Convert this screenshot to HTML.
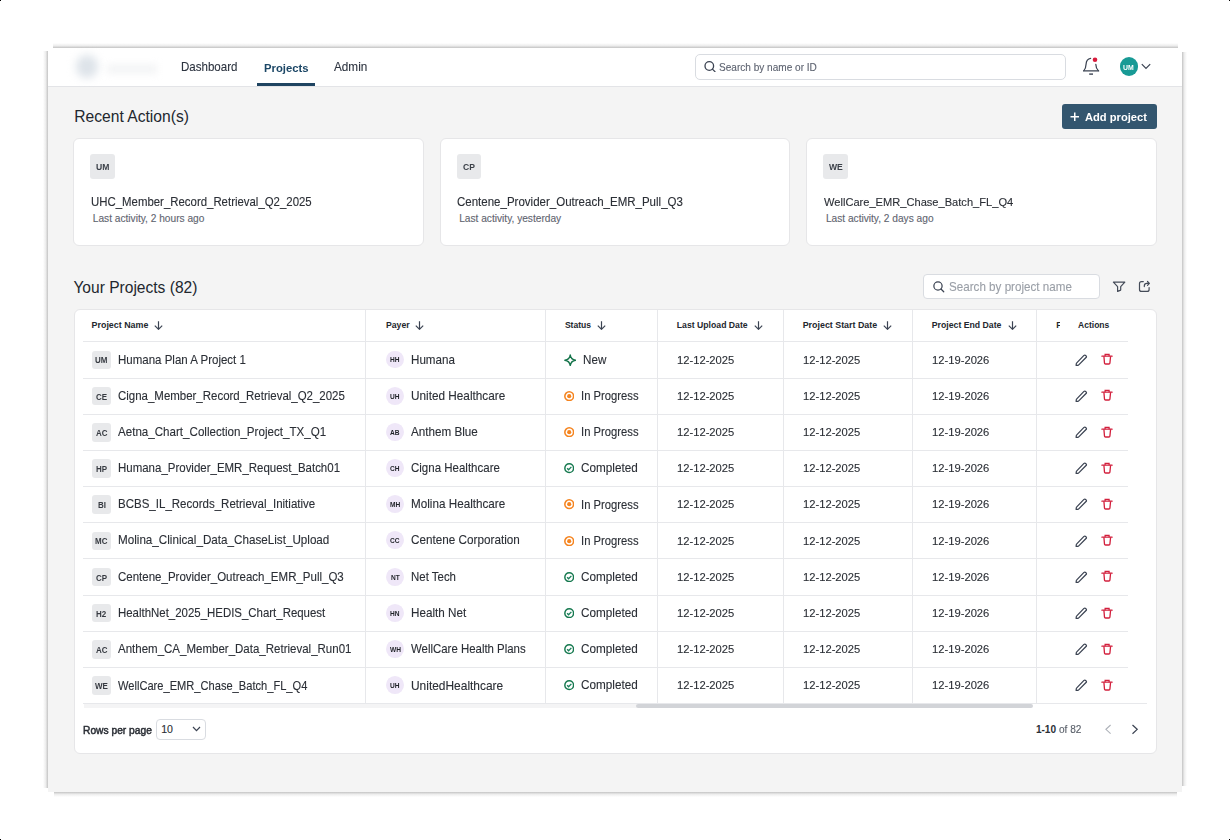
<!DOCTYPE html>
<html><head><meta charset="utf-8"><style>
html,body{margin:0;padding:0;}
body{width:1230px;height:840px;position:relative;overflow:hidden;background:#fff;font-family:"Liberation Sans",sans-serif;}
.t{position:absolute;white-space:nowrap;line-height:1;}
.r{-webkit-text-stroke:0.12px currentColor;}
</style></head><body>
<div style="position:absolute;left:0.00px;top:0.00px;width:1.00px;height:1.00px;background:#000"></div>
<div style="position:absolute;left:1229.00px;top:0.00px;width:1.00px;height:1.00px;background:#000"></div>
<div style="position:absolute;left:0.00px;top:839.00px;width:1.00px;height:1.00px;background:#000"></div>
<div style="position:absolute;left:1229.00px;top:839.00px;width:1.00px;height:1.00px;background:#000"></div>
<div style="position:absolute;left:53.00px;top:43.00px;width:1125.00px;height:5.00px;background:linear-gradient(to top,rgba(112,112,112,.42),rgba(140,140,140,.16) 45%,rgba(255,255,255,0))"></div>
<div style="position:absolute;left:43.00px;top:51.00px;width:5.00px;height:737.00px;background:linear-gradient(to left,rgba(112,112,112,.42),rgba(140,140,140,.16) 45%,rgba(255,255,255,0))"></div>
<div style="position:absolute;left:1182.00px;top:52.00px;width:5.00px;height:734.00px;background:linear-gradient(to right,rgba(112,112,112,.42),rgba(140,140,140,.16) 45%,rgba(255,255,255,0))"></div>
<div style="position:absolute;left:53.50px;top:791.50px;width:1123.00px;height:5.00px;background:linear-gradient(to bottom,rgba(112,112,112,.42),rgba(140,140,140,.16) 45%,rgba(255,255,255,0))"></div>
<div style="position:absolute;left:48.00px;top:48.00px;width:1134.00px;height:743.50px;background:#f4f4f4"></div>
<div style="position:absolute;left:48.00px;top:48.00px;width:1134.00px;height:38.00px;background:#fff"></div>
<div style="position:absolute;left:48.00px;top:86.00px;width:1134.00px;height:1.00px;background:#e3e4e7"></div>
<div style="position:absolute;left:76.00px;top:55.00px;width:22.00px;height:23.00px;background:#dde3e9;border-radius:50%;filter:blur(4px)"></div>
<div style="position:absolute;left:107.00px;top:64.00px;width:50.00px;height:10.00px;background:#f4f5f6;filter:blur(3.5px)"></div>
<div class="t r" style="left:180.70px;top:60.86px;font-size:12.69px;font-weight:400;color:#2d3440;transform:scaleX(0.9091);transform-origin:0 0;">Dashboard</div>
<div class="t" style="left:263.50px;top:62.45px;font-size:11.76px;font-weight:700;color:#1c4766;transform:scaleX(0.9615);transform-origin:0 0;">Projects</div>
<div style="position:absolute;left:257.00px;top:83.00px;width:58.00px;height:3.00px;background:#1f4461"></div>
<div class="t r" style="left:334.00px;top:60.96px;font-size:12.45px;font-weight:400;color:#2d3440;transform:scaleX(0.9434);transform-origin:0 0;">Admin</div>
<div style="position:absolute;left:694.50px;top:54.00px;width:371.00px;height:25.50px;background:#fff;border:1px solid #d9dce1;border-radius:5px;box-sizing:border-box"></div>
<svg style="position:absolute;left:704.00px;top:61.30px;" width="12.00" height="11.00" viewBox="0 0 12 11" fill="none"><circle cx="5.3" cy="5" r="4.3" stroke="#3b4352" stroke-width="1.3"/><line x1="8.4" y1="8.1" x2="11" y2="10.6" stroke="#3b4352" stroke-width="1.3" stroke-linecap="round"/></svg>
<div class="t r" style="left:719.30px;top:62.27px;font-size:10.78px;font-weight:400;color:#5d6370;transform:scaleX(0.9346);transform-origin:0 0;">Search by name or ID</div>
<svg style="position:absolute;left:1078.00px;top:52.00px;" width="28.00" height="28.00" viewBox="0 0 28 28" fill="none"><path d="M12.6 6.4 C9.6 6.9 8.3 9 8.1 12 C7.9 15.4 7.4 17.1 5.9 18.6" stroke="#3b4352" stroke-width="1.25" stroke-linecap="round"/><path d="M17.8 12.3 C17.9 15.2 18.5 17 20.3 18.6" stroke="#3b4352" stroke-width="1.25" stroke-linecap="round"/><path d="M5.6 18.9 H20.6" stroke="#3b4352" stroke-width="1.3" stroke-linecap="round"/><path d="M11.2 22.1 H15" stroke="#3b4352" stroke-width="1.4"/><circle cx="17" cy="7.7" r="2.3" fill="#d81b3c"/></svg>
<div style="position:absolute;left:1119.50px;top:57.30px;width:18.80px;height:18.80px;background:#189a95;border-radius:50%"></div>
<div class="t" style="left:1123.30px;top:63.98px;font-size:7.71px;font-weight:700;color:#fff;transform:scaleX(0.8929);transform-origin:0 0;">UM</div>
<svg style="position:absolute;left:1141.30px;top:63.00px;" width="10.00" height="7.00" viewBox="0 0 10 7" fill="none"><path d="M0.8 1.2 L5 5.5 L9.2 1.2" stroke="#3b4352" stroke-width="1.2"/></svg>
<div class="t r" style="left:74.30px;top:109.26px;font-size:15.64px;font-weight:400;color:#22272e;-webkit-text-stroke:0">Recent Action(s)</div>
<div style="position:absolute;left:1062.20px;top:104.00px;width:94.60px;height:25.00px;background:#33566f;border-radius:3px"></div>
<svg style="position:absolute;left:1070.00px;top:112.00px;" width="9.50" height="9.50" viewBox="0 0 9.5 9.5" fill="none"><path d="M4.75 0.5 V9 M0.5 4.75 H9" stroke="#fff" stroke-width="1.5"/></svg>
<div class="t" style="left:1084.60px;top:111.69px;font-size:11.83px;font-weight:700;color:#fff;transform:scaleX(0.9434);transform-origin:0 0;">Add project</div>
<div style="position:absolute;left:73.20px;top:138.40px;width:350.80px;height:107.20px;background:#fff;border:1px solid #e6e6e8;border-radius:6px;box-sizing:border-box"></div>
<div style="position:absolute;left:90.10px;top:154.30px;width:24.80px;height:24.80px;background:#e8e9eb;border-radius:3px"></div>
<div class="t" style="left:95.81px;top:162.83px;font-size:8.94px;font-weight:700;color:#3c4149;transform:scaleX(0.9615);transform-origin:0 0;">UM</div>
<div class="t r" style="left:90.50px;top:196.16px;font-size:12.10px;font-weight:400;color:#2b2f36;transform:scaleX(0.9434);transform-origin:0 0;">UHC_Member_Record_Retrieval_Q2_2025</div>
<div class="t r" style="left:92.80px;top:213.80px;font-size:10.16px;font-weight:400;color:#5f6570;">Last activity, 2 hours ago</div>
<div style="position:absolute;left:439.60px;top:138.40px;width:350.80px;height:107.20px;background:#fff;border:1px solid #e6e6e8;border-radius:6px;box-sizing:border-box"></div>
<div style="position:absolute;left:456.50px;top:154.30px;width:24.80px;height:24.80px;background:#e8e9eb;border-radius:3px"></div>
<div class="t" style="left:462.92px;top:162.83px;font-size:8.94px;font-weight:700;color:#3c4149;transform:scaleX(0.9615);transform-origin:0 0;">CP</div>
<div class="t r" style="left:456.90px;top:196.07px;font-size:12.21px;font-weight:400;color:#2b2f36;transform:scaleX(0.9434);transform-origin:0 0;">Centene_Provider_Outreach_EMR_Pull_Q3</div>
<div class="t r" style="left:459.20px;top:213.80px;font-size:10.16px;font-weight:400;color:#5f6570;">Last activity, yesterday</div>
<div style="position:absolute;left:806.30px;top:138.40px;width:350.80px;height:107.20px;background:#fff;border:1px solid #e6e6e8;border-radius:6px;box-sizing:border-box"></div>
<div style="position:absolute;left:823.20px;top:154.30px;width:24.80px;height:24.80px;background:#e8e9eb;border-radius:3px"></div>
<div class="t" style="left:828.68px;top:162.83px;font-size:8.94px;font-weight:700;color:#3c4149;transform:scaleX(0.9615);transform-origin:0 0;">WE</div>
<div class="t r" style="left:823.60px;top:196.43px;font-size:11.77px;font-weight:400;color:#2b2f36;transform:scaleX(0.9434);transform-origin:0 0;">WellCare_EMR_Chase_Batch_FL_Q4</div>
<div class="t r" style="left:825.90px;top:213.80px;font-size:10.16px;font-weight:400;color:#5f6570;">Last activity, 2 days ago</div>
<div class="t r" style="left:73.40px;top:279.92px;font-size:15.57px;font-weight:400;color:#22272e;-webkit-text-stroke:0">Your Projects (82)</div>
<div style="position:absolute;left:923.10px;top:274.10px;width:176.50px;height:24.80px;background:#fff;border:1px solid #d9dce1;border-radius:4px;box-sizing:border-box"></div>
<svg style="position:absolute;left:933.00px;top:281.00px;" width="11.50" height="11.50" viewBox="0 0 12 12" fill="none"><circle cx="5.2" cy="5.2" r="4.3" stroke="#3b4352" stroke-width="1.3"/><line x1="8.3" y1="8.3" x2="11.2" y2="11.2" stroke="#3b4352" stroke-width="1.3" stroke-linecap="round"/></svg>
<div class="t r" style="left:948.50px;top:281.05px;font-size:12.23px;font-weight:400;color:#9a9fa7;transform:scaleX(0.9524);transform-origin:0 0;">Search by project name</div>
<svg style="position:absolute;left:1108.00px;top:274.00px;" width="48.00" height="24.00" viewBox="0 0 48 24" fill="none"><path d="M5.4 8.2 H16.8 L12.7 12.7 V16.1 L9.6 17.4 V12.7 Z" stroke="#444b58" stroke-width="1.2" stroke-linejoin="round"/><path d="M35.3 7.6 H33.5 Q31.5 7.6 31.5 9.6 V15.4 Q31.5 17.4 33.5 17.4 H39.1 Q41.1 17.4 41.1 15.4 V13.5" stroke="#444b58" stroke-width="1.2" stroke-linecap="round"/><path d="M36.3 12.6 V11.9 Q36.3 9.4 38.8 9.4 H41.3 M39.5 7.5 L41.4 9.4 L39.5 11.3" stroke="#444b58" stroke-width="1.2" stroke-linecap="round" stroke-linejoin="round"/></svg>
<div style="position:absolute;left:73.50px;top:309.00px;width:1083.00px;height:445.00px;background:#fff;border:1px solid #e6e6e8;border-radius:6px;box-sizing:border-box"></div>
<div style="position:absolute;left:83.00px;top:341.40px;width:1045.30px;height:1.00px;background:#e7e8eb"></div>
<div style="position:absolute;left:83.00px;top:377.58px;width:1045.30px;height:1.00px;background:#e7e8eb"></div>
<div style="position:absolute;left:83.00px;top:413.76px;width:1045.30px;height:1.00px;background:#e7e8eb"></div>
<div style="position:absolute;left:83.00px;top:449.94px;width:1045.30px;height:1.00px;background:#e7e8eb"></div>
<div style="position:absolute;left:83.00px;top:486.12px;width:1045.30px;height:1.00px;background:#e7e8eb"></div>
<div style="position:absolute;left:83.00px;top:522.30px;width:1045.30px;height:1.00px;background:#e7e8eb"></div>
<div style="position:absolute;left:83.00px;top:558.48px;width:1045.30px;height:1.00px;background:#e7e8eb"></div>
<div style="position:absolute;left:83.00px;top:594.66px;width:1045.30px;height:1.00px;background:#e7e8eb"></div>
<div style="position:absolute;left:83.00px;top:630.84px;width:1045.30px;height:1.00px;background:#e7e8eb"></div>
<div style="position:absolute;left:83.00px;top:667.02px;width:1045.30px;height:1.00px;background:#e7e8eb"></div>
<div style="position:absolute;left:83.00px;top:703.20px;width:1064.00px;height:1.00px;background:#e7e8eb"></div>
<div style="position:absolute;left:364.90px;top:309.50px;width:1.00px;height:394.00px;background:#e7e8eb"></div>
<div style="position:absolute;left:545.10px;top:309.50px;width:1.00px;height:394.00px;background:#e7e8eb"></div>
<div style="position:absolute;left:656.70px;top:309.50px;width:1.00px;height:394.00px;background:#e7e8eb"></div>
<div style="position:absolute;left:782.50px;top:309.50px;width:1.00px;height:394.00px;background:#e7e8eb"></div>
<div style="position:absolute;left:912.20px;top:309.50px;width:1.00px;height:394.00px;background:#e7e8eb"></div>
<div style="position:absolute;left:1036.10px;top:309.50px;width:1.00px;height:394.00px;background:#e7e8eb"></div>
<div class="t" style="left:91.60px;top:321.08px;font-size:8.89px;font-weight:700;color:#23272e;">Project Name</div>
<svg style="position:absolute;left:153.80px;top:321.00px;" width="9.00" height="9.00" viewBox="0 0 9 9" fill="none"><path d="M4.5 0.3 V8.2 M0.8 4.6 L4.5 8.3 L8.2 4.6" stroke="#3b4352" stroke-width="1.2"/></svg>
<div class="t" style="left:386.00px;top:321.27px;font-size:8.66px;font-weight:700;color:#23272e;">Payer</div>
<svg style="position:absolute;left:415.20px;top:321.00px;" width="9.00" height="9.00" viewBox="0 0 9 9" fill="none"><path d="M4.5 0.3 V8.2 M0.8 4.6 L4.5 8.3 L8.2 4.6" stroke="#3b4352" stroke-width="1.2"/></svg>
<div class="t" style="left:564.90px;top:321.34px;font-size:8.58px;font-weight:700;color:#23272e;">Status</div>
<svg style="position:absolute;left:597.00px;top:321.00px;" width="9.00" height="9.00" viewBox="0 0 9 9" fill="none"><path d="M4.5 0.3 V8.2 M0.8 4.6 L4.5 8.3 L8.2 4.6" stroke="#3b4352" stroke-width="1.2"/></svg>
<div class="t" style="left:676.80px;top:321.24px;font-size:8.69px;font-weight:700;color:#23272e;">Last Upload Date</div>
<svg style="position:absolute;left:753.80px;top:321.00px;" width="9.00" height="9.00" viewBox="0 0 9 9" fill="none"><path d="M4.5 0.3 V8.2 M0.8 4.6 L4.5 8.3 L8.2 4.6" stroke="#3b4352" stroke-width="1.2"/></svg>
<div class="t" style="left:802.70px;top:321.06px;font-size:8.90px;font-weight:700;color:#23272e;">Project Start Date</div>
<svg style="position:absolute;left:883.00px;top:321.00px;" width="9.00" height="9.00" viewBox="0 0 9 9" fill="none"><path d="M4.5 0.3 V8.2 M0.8 4.6 L4.5 8.3 L8.2 4.6" stroke="#3b4352" stroke-width="1.2"/></svg>
<div class="t" style="left:931.80px;top:321.22px;font-size:8.71px;font-weight:700;color:#23272e;">Project End Date</div>
<svg style="position:absolute;left:1007.60px;top:321.00px;" width="9.00" height="9.00" viewBox="0 0 9 9" fill="none"><path d="M4.5 0.3 V8.2 M0.8 4.6 L4.5 8.3 L8.2 4.6" stroke="#3b4352" stroke-width="1.2"/></svg>
<div class="t" style="left:1056.20px;top:321.24px;font-size:8.70px;font-weight:700;color:#23272e;width:3.6px;overflow:hidden">F</div>
<div class="t" style="left:1078.10px;top:321.39px;font-size:8.51px;font-weight:700;color:#23272e;">Actions</div>
<div style="position:absolute;left:92.10px;top:350.60px;width:18.80px;height:18.60px;background:#e8e9eb;border-radius:3px"></div>
<div class="t" style="left:95.28px;top:356.45px;font-size:8.80px;font-weight:700;color:#363a41;transform:scaleX(0.9091);transform-origin:0 0;">UM</div>
<div class="t r" style="left:117.70px;top:353.67px;font-size:12.67px;font-weight:400;color:#2b2f36;transform:scaleX(0.9091);transform-origin:0 0;">Humana Plan A Project 1</div>
<div style="position:absolute;left:386.20px;top:350.55px;width:17.90px;height:17.90px;background:#efe7f8;border-radius:50%"></div>
<div class="t" style="left:390.38px;top:356.45px;font-size:7.26px;font-weight:700;color:#1e2126;transform:scaleX(0.9091);transform-origin:0 0;">HH</div>
<div class="t r" style="left:411.40px;top:353.58px;font-size:12.79px;font-weight:400;color:#2b2f36;transform:scaleX(0.9091);transform-origin:0 0;">Humana</div>
<svg style="position:absolute;left:563.90px;top:353.60px;" width="12.50" height="12.50" viewBox="0 0 12 12" fill="none"><path d="M6 0.8 Q6.6 5.4 11.2 6 Q6.6 6.6 6 11.2 Q5.4 6.6 0.8 6 Q5.4 5.4 6 0.8 Z" stroke="#137349" stroke-width="1.3" stroke-linejoin="round"/></svg>
<div class="t r" style="left:582.90px;top:353.53px;font-size:12.84px;font-weight:400;color:#2b2f36;transform:scaleX(0.9091);transform-origin:0 0;">New</div>
<div class="t r" style="left:676.70px;top:353.74px;font-size:11.65px;font-weight:400;color:#2b2f36;transform:scaleX(0.9615);transform-origin:0 0;">12-12-2025</div>
<div class="t r" style="left:802.70px;top:353.74px;font-size:11.65px;font-weight:400;color:#2b2f36;transform:scaleX(0.9615);transform-origin:0 0;">12-12-2025</div>
<div class="t r" style="left:931.80px;top:353.72px;font-size:11.67px;font-weight:400;color:#2b2f36;transform:scaleX(0.9615);transform-origin:0 0;">12-19-2026</div>
<svg style="position:absolute;left:1075.20px;top:353.60px;" width="12.50" height="12.50" viewBox="0 0 12 12" fill="none"><path d="M8.6 1.3 Q9.4 0.6 10.3 1.5 L10.6 1.8 Q11.4 2.6 10.6 3.4 L3.6 10.4 Q3.2 10.8 2.6 10.9 L1.1 11 L1.2 9.5 Q1.3 8.9 1.7 8.5 Z" stroke="#3b4352" stroke-width="1.2" stroke-linejoin="round"/></svg>
<svg style="position:absolute;left:1100.50px;top:353.30px;" width="12.00" height="12.00" viewBox="0 0 12 12" fill="none"><path d="M0.9 3.2 H11.1" stroke="#d21f3c" stroke-width="1.3" stroke-linecap="round"/><path d="M4.1 3.2 V1.4 H8.1 V3.2" stroke="#d21f3c" stroke-width="1.2"/><path d="M2.9 3.2 L3.5 10.1 Q3.6 11.0 4.5 11.0 H7.9 Q8.8 11.0 8.9 10.1 L9.6 3.2" stroke="#d21f3c" stroke-width="1.3"/></svg>
<div style="position:absolute;left:92.10px;top:386.78px;width:18.80px;height:18.60px;background:#e8e9eb;border-radius:3px"></div>
<div class="t" style="left:95.94px;top:392.63px;font-size:8.80px;font-weight:700;color:#363a41;transform:scaleX(0.9091);transform-origin:0 0;">CE</div>
<div class="t r" style="left:117.70px;top:389.91px;font-size:12.61px;font-weight:400;color:#2b2f36;transform:scaleX(0.9091);transform-origin:0 0;">Cigna_Member_Record_Retrieval_Q2_2025</div>
<div style="position:absolute;left:386.20px;top:386.73px;width:17.90px;height:17.90px;background:#efe7f8;border-radius:50%"></div>
<div class="t" style="left:390.38px;top:392.63px;font-size:7.26px;font-weight:700;color:#1e2126;transform:scaleX(0.9091);transform-origin:0 0;">UH</div>
<div class="t r" style="left:411.40px;top:389.61px;font-size:12.96px;font-weight:400;color:#2b2f36;transform:scaleX(0.9091);transform-origin:0 0;">United Healthcare</div>
<svg style="position:absolute;left:564.00px;top:390.88px;" width="10.40" height="10.40" viewBox="0 0 10 10" fill="none"><circle cx="5" cy="5" r="4.2" stroke="#f5841f" stroke-width="1.5"/><circle cx="5" cy="5" r="2" fill="#f5841f"/></svg>
<div class="t r" style="left:580.70px;top:390.09px;font-size:12.39px;font-weight:400;color:#2b2f36;transform:scaleX(0.9091);transform-origin:0 0;">In Progress</div>
<div class="t r" style="left:676.70px;top:389.92px;font-size:11.65px;font-weight:400;color:#2b2f36;transform:scaleX(0.9615);transform-origin:0 0;">12-12-2025</div>
<div class="t r" style="left:802.70px;top:389.92px;font-size:11.65px;font-weight:400;color:#2b2f36;transform:scaleX(0.9615);transform-origin:0 0;">12-12-2025</div>
<div class="t r" style="left:931.80px;top:389.90px;font-size:11.67px;font-weight:400;color:#2b2f36;transform:scaleX(0.9615);transform-origin:0 0;">12-19-2026</div>
<svg style="position:absolute;left:1075.20px;top:389.78px;" width="12.50" height="12.50" viewBox="0 0 12 12" fill="none"><path d="M8.6 1.3 Q9.4 0.6 10.3 1.5 L10.6 1.8 Q11.4 2.6 10.6 3.4 L3.6 10.4 Q3.2 10.8 2.6 10.9 L1.1 11 L1.2 9.5 Q1.3 8.9 1.7 8.5 Z" stroke="#3b4352" stroke-width="1.2" stroke-linejoin="round"/></svg>
<svg style="position:absolute;left:1100.50px;top:389.48px;" width="12.00" height="12.00" viewBox="0 0 12 12" fill="none"><path d="M0.9 3.2 H11.1" stroke="#d21f3c" stroke-width="1.3" stroke-linecap="round"/><path d="M4.1 3.2 V1.4 H8.1 V3.2" stroke="#d21f3c" stroke-width="1.2"/><path d="M2.9 3.2 L3.5 10.1 Q3.6 11.0 4.5 11.0 H7.9 Q8.8 11.0 8.9 10.1 L9.6 3.2" stroke="#d21f3c" stroke-width="1.3"/></svg>
<div style="position:absolute;left:92.10px;top:422.96px;width:18.80px;height:18.60px;background:#e8e9eb;border-radius:3px"></div>
<div class="t" style="left:95.72px;top:428.81px;font-size:8.80px;font-weight:700;color:#363a41;transform:scaleX(0.9091);transform-origin:0 0;">AC</div>
<div class="t r" style="left:117.70px;top:425.97px;font-size:12.75px;font-weight:400;color:#2b2f36;transform:scaleX(0.9091);transform-origin:0 0;">Aetna_Chart_Collection_Project_TX_Q1</div>
<div style="position:absolute;left:386.20px;top:422.91px;width:17.90px;height:17.90px;background:#efe7f8;border-radius:50%"></div>
<div class="t" style="left:390.38px;top:428.81px;font-size:7.26px;font-weight:700;color:#1e2126;transform:scaleX(0.9091);transform-origin:0 0;">AB</div>
<div class="t r" style="left:411.40px;top:425.88px;font-size:12.85px;font-weight:400;color:#2b2f36;transform:scaleX(0.9091);transform-origin:0 0;">Anthem Blue</div>
<svg style="position:absolute;left:564.00px;top:427.06px;" width="10.40" height="10.40" viewBox="0 0 10 10" fill="none"><circle cx="5" cy="5" r="4.2" stroke="#f5841f" stroke-width="1.5"/><circle cx="5" cy="5" r="2" fill="#f5841f"/></svg>
<div class="t r" style="left:580.70px;top:426.27px;font-size:12.39px;font-weight:400;color:#2b2f36;transform:scaleX(0.9091);transform-origin:0 0;">In Progress</div>
<div class="t r" style="left:676.70px;top:426.10px;font-size:11.65px;font-weight:400;color:#2b2f36;transform:scaleX(0.9615);transform-origin:0 0;">12-12-2025</div>
<div class="t r" style="left:802.70px;top:426.10px;font-size:11.65px;font-weight:400;color:#2b2f36;transform:scaleX(0.9615);transform-origin:0 0;">12-12-2025</div>
<div class="t r" style="left:931.80px;top:426.08px;font-size:11.67px;font-weight:400;color:#2b2f36;transform:scaleX(0.9615);transform-origin:0 0;">12-19-2026</div>
<svg style="position:absolute;left:1075.20px;top:425.96px;" width="12.50" height="12.50" viewBox="0 0 12 12" fill="none"><path d="M8.6 1.3 Q9.4 0.6 10.3 1.5 L10.6 1.8 Q11.4 2.6 10.6 3.4 L3.6 10.4 Q3.2 10.8 2.6 10.9 L1.1 11 L1.2 9.5 Q1.3 8.9 1.7 8.5 Z" stroke="#3b4352" stroke-width="1.2" stroke-linejoin="round"/></svg>
<svg style="position:absolute;left:1100.50px;top:425.66px;" width="12.00" height="12.00" viewBox="0 0 12 12" fill="none"><path d="M0.9 3.2 H11.1" stroke="#d21f3c" stroke-width="1.3" stroke-linecap="round"/><path d="M4.1 3.2 V1.4 H8.1 V3.2" stroke="#d21f3c" stroke-width="1.2"/><path d="M2.9 3.2 L3.5 10.1 Q3.6 11.0 4.5 11.0 H7.9 Q8.8 11.0 8.9 10.1 L9.6 3.2" stroke="#d21f3c" stroke-width="1.3"/></svg>
<div style="position:absolute;left:92.10px;top:459.14px;width:18.80px;height:18.60px;background:#e8e9eb;border-radius:3px"></div>
<div class="t" style="left:95.94px;top:464.99px;font-size:8.80px;font-weight:700;color:#363a41;transform:scaleX(0.9091);transform-origin:0 0;">HP</div>
<div class="t r" style="left:117.70px;top:462.24px;font-size:12.64px;font-weight:400;color:#2b2f36;transform:scaleX(0.9091);transform-origin:0 0;">Humana_Provider_EMR_Request_Batch01</div>
<div style="position:absolute;left:386.20px;top:459.09px;width:17.90px;height:17.90px;background:#efe7f8;border-radius:50%"></div>
<div class="t" style="left:390.38px;top:464.99px;font-size:7.26px;font-weight:700;color:#1e2126;transform:scaleX(0.9091);transform-origin:0 0;">CH</div>
<div class="t r" style="left:411.40px;top:462.21px;font-size:12.67px;font-weight:400;color:#2b2f36;transform:scaleX(0.9091);transform-origin:0 0;">Cigna Healthcare</div>
<svg style="position:absolute;left:564.00px;top:463.24px;" width="10.40" height="10.40" viewBox="0 0 10 10" fill="none"><circle cx="5" cy="5" r="4.2" stroke="#16794f" stroke-width="1.4"/><path d="M3 5.1 L4.4 6.5 L7.1 3.7" stroke="#1a7f5a" stroke-width="1.3"/></svg>
<div class="t r" style="left:580.70px;top:462.00px;font-size:12.92px;font-weight:400;color:#2b2f36;transform:scaleX(0.9091);transform-origin:0 0;">Completed</div>
<div class="t r" style="left:676.70px;top:462.28px;font-size:11.65px;font-weight:400;color:#2b2f36;transform:scaleX(0.9615);transform-origin:0 0;">12-12-2025</div>
<div class="t r" style="left:802.70px;top:462.28px;font-size:11.65px;font-weight:400;color:#2b2f36;transform:scaleX(0.9615);transform-origin:0 0;">12-12-2025</div>
<div class="t r" style="left:931.80px;top:462.26px;font-size:11.67px;font-weight:400;color:#2b2f36;transform:scaleX(0.9615);transform-origin:0 0;">12-19-2026</div>
<svg style="position:absolute;left:1075.20px;top:462.14px;" width="12.50" height="12.50" viewBox="0 0 12 12" fill="none"><path d="M8.6 1.3 Q9.4 0.6 10.3 1.5 L10.6 1.8 Q11.4 2.6 10.6 3.4 L3.6 10.4 Q3.2 10.8 2.6 10.9 L1.1 11 L1.2 9.5 Q1.3 8.9 1.7 8.5 Z" stroke="#3b4352" stroke-width="1.2" stroke-linejoin="round"/></svg>
<svg style="position:absolute;left:1100.50px;top:461.84px;" width="12.00" height="12.00" viewBox="0 0 12 12" fill="none"><path d="M0.9 3.2 H11.1" stroke="#d21f3c" stroke-width="1.3" stroke-linecap="round"/><path d="M4.1 3.2 V1.4 H8.1 V3.2" stroke="#d21f3c" stroke-width="1.2"/><path d="M2.9 3.2 L3.5 10.1 Q3.6 11.0 4.5 11.0 H7.9 Q8.8 11.0 8.9 10.1 L9.6 3.2" stroke="#d21f3c" stroke-width="1.3"/></svg>
<div style="position:absolute;left:92.10px;top:495.32px;width:18.80px;height:18.60px;background:#e8e9eb;border-radius:3px"></div>
<div class="t" style="left:97.50px;top:501.17px;font-size:8.80px;font-weight:700;color:#363a41;transform:scaleX(0.9091);transform-origin:0 0;">BI</div>
<div class="t r" style="left:117.70px;top:498.38px;font-size:12.68px;font-weight:400;color:#2b2f36;transform:scaleX(0.9091);transform-origin:0 0;">BCBS_IL_Records_Retrieval_Initiative</div>
<div style="position:absolute;left:386.20px;top:495.27px;width:17.90px;height:17.90px;background:#efe7f8;border-radius:50%"></div>
<div class="t" style="left:390.02px;top:501.17px;font-size:7.26px;font-weight:700;color:#1e2126;transform:scaleX(0.9091);transform-origin:0 0;">MH</div>
<div class="t r" style="left:411.40px;top:498.23px;font-size:12.87px;font-weight:400;color:#2b2f36;transform:scaleX(0.9091);transform-origin:0 0;">Molina Healthcare</div>
<svg style="position:absolute;left:564.00px;top:499.42px;" width="10.40" height="10.40" viewBox="0 0 10 10" fill="none"><circle cx="5" cy="5" r="4.2" stroke="#f5841f" stroke-width="1.5"/><circle cx="5" cy="5" r="2" fill="#f5841f"/></svg>
<div class="t r" style="left:580.70px;top:498.63px;font-size:12.39px;font-weight:400;color:#2b2f36;transform:scaleX(0.9091);transform-origin:0 0;">In Progress</div>
<div class="t r" style="left:676.70px;top:498.46px;font-size:11.65px;font-weight:400;color:#2b2f36;transform:scaleX(0.9615);transform-origin:0 0;">12-12-2025</div>
<div class="t r" style="left:802.70px;top:498.46px;font-size:11.65px;font-weight:400;color:#2b2f36;transform:scaleX(0.9615);transform-origin:0 0;">12-12-2025</div>
<div class="t r" style="left:931.80px;top:498.44px;font-size:11.67px;font-weight:400;color:#2b2f36;transform:scaleX(0.9615);transform-origin:0 0;">12-19-2026</div>
<svg style="position:absolute;left:1075.20px;top:498.32px;" width="12.50" height="12.50" viewBox="0 0 12 12" fill="none"><path d="M8.6 1.3 Q9.4 0.6 10.3 1.5 L10.6 1.8 Q11.4 2.6 10.6 3.4 L3.6 10.4 Q3.2 10.8 2.6 10.9 L1.1 11 L1.2 9.5 Q1.3 8.9 1.7 8.5 Z" stroke="#3b4352" stroke-width="1.2" stroke-linejoin="round"/></svg>
<svg style="position:absolute;left:1100.50px;top:498.02px;" width="12.00" height="12.00" viewBox="0 0 12 12" fill="none"><path d="M0.9 3.2 H11.1" stroke="#d21f3c" stroke-width="1.3" stroke-linecap="round"/><path d="M4.1 3.2 V1.4 H8.1 V3.2" stroke="#d21f3c" stroke-width="1.2"/><path d="M2.9 3.2 L3.5 10.1 Q3.6 11.0 4.5 11.0 H7.9 Q8.8 11.0 8.9 10.1 L9.6 3.2" stroke="#d21f3c" stroke-width="1.3"/></svg>
<div style="position:absolute;left:92.10px;top:531.50px;width:18.80px;height:18.60px;background:#e8e9eb;border-radius:3px"></div>
<div class="t" style="left:95.28px;top:537.35px;font-size:8.80px;font-weight:700;color:#363a41;transform:scaleX(0.9091);transform-origin:0 0;">MC</div>
<div class="t r" style="left:117.70px;top:534.43px;font-size:12.84px;font-weight:400;color:#2b2f36;transform:scaleX(0.9091);transform-origin:0 0;">Molina_Clinical_Data_ChaseList_Upload</div>
<div style="position:absolute;left:386.20px;top:531.45px;width:17.90px;height:17.90px;background:#efe7f8;border-radius:50%"></div>
<div class="t" style="left:390.38px;top:537.35px;font-size:7.26px;font-weight:700;color:#1e2126;transform:scaleX(0.9091);transform-origin:0 0;">CC</div>
<div class="t r" style="left:411.40px;top:534.38px;font-size:12.90px;font-weight:400;color:#2b2f36;transform:scaleX(0.9091);transform-origin:0 0;">Centene Corporation</div>
<svg style="position:absolute;left:564.00px;top:535.60px;" width="10.40" height="10.40" viewBox="0 0 10 10" fill="none"><circle cx="5" cy="5" r="4.2" stroke="#f5841f" stroke-width="1.5"/><circle cx="5" cy="5" r="2" fill="#f5841f"/></svg>
<div class="t r" style="left:580.70px;top:534.81px;font-size:12.39px;font-weight:400;color:#2b2f36;transform:scaleX(0.9091);transform-origin:0 0;">In Progress</div>
<div class="t r" style="left:676.70px;top:534.64px;font-size:11.65px;font-weight:400;color:#2b2f36;transform:scaleX(0.9615);transform-origin:0 0;">12-12-2025</div>
<div class="t r" style="left:802.70px;top:534.64px;font-size:11.65px;font-weight:400;color:#2b2f36;transform:scaleX(0.9615);transform-origin:0 0;">12-12-2025</div>
<div class="t r" style="left:931.80px;top:534.62px;font-size:11.67px;font-weight:400;color:#2b2f36;transform:scaleX(0.9615);transform-origin:0 0;">12-19-2026</div>
<svg style="position:absolute;left:1075.20px;top:534.50px;" width="12.50" height="12.50" viewBox="0 0 12 12" fill="none"><path d="M8.6 1.3 Q9.4 0.6 10.3 1.5 L10.6 1.8 Q11.4 2.6 10.6 3.4 L3.6 10.4 Q3.2 10.8 2.6 10.9 L1.1 11 L1.2 9.5 Q1.3 8.9 1.7 8.5 Z" stroke="#3b4352" stroke-width="1.2" stroke-linejoin="round"/></svg>
<svg style="position:absolute;left:1100.50px;top:534.20px;" width="12.00" height="12.00" viewBox="0 0 12 12" fill="none"><path d="M0.9 3.2 H11.1" stroke="#d21f3c" stroke-width="1.3" stroke-linecap="round"/><path d="M4.1 3.2 V1.4 H8.1 V3.2" stroke="#d21f3c" stroke-width="1.2"/><path d="M2.9 3.2 L3.5 10.1 Q3.6 11.0 4.5 11.0 H7.9 Q8.8 11.0 8.9 10.1 L9.6 3.2" stroke="#d21f3c" stroke-width="1.3"/></svg>
<div style="position:absolute;left:92.10px;top:567.68px;width:18.80px;height:18.60px;background:#e8e9eb;border-radius:3px"></div>
<div class="t" style="left:95.94px;top:573.53px;font-size:8.80px;font-weight:700;color:#363a41;transform:scaleX(0.9091);transform-origin:0 0;">CP</div>
<div class="t r" style="left:117.70px;top:570.76px;font-size:12.66px;font-weight:400;color:#2b2f36;transform:scaleX(0.9091);transform-origin:0 0;">Centene_Provider_Outreach_EMR_Pull_Q3</div>
<div style="position:absolute;left:386.20px;top:567.63px;width:17.90px;height:17.90px;background:#efe7f8;border-radius:50%"></div>
<div class="t" style="left:390.74px;top:573.53px;font-size:7.26px;font-weight:700;color:#1e2126;transform:scaleX(0.9091);transform-origin:0 0;">NT</div>
<div class="t r" style="left:411.40px;top:570.82px;font-size:12.60px;font-weight:400;color:#2b2f36;transform:scaleX(0.9091);transform-origin:0 0;">Net Tech</div>
<svg style="position:absolute;left:564.00px;top:571.78px;" width="10.40" height="10.40" viewBox="0 0 10 10" fill="none"><circle cx="5" cy="5" r="4.2" stroke="#16794f" stroke-width="1.4"/><path d="M3 5.1 L4.4 6.5 L7.1 3.7" stroke="#1a7f5a" stroke-width="1.3"/></svg>
<div class="t r" style="left:580.70px;top:570.54px;font-size:12.92px;font-weight:400;color:#2b2f36;transform:scaleX(0.9091);transform-origin:0 0;">Completed</div>
<div class="t r" style="left:676.70px;top:570.82px;font-size:11.65px;font-weight:400;color:#2b2f36;transform:scaleX(0.9615);transform-origin:0 0;">12-12-2025</div>
<div class="t r" style="left:802.70px;top:570.82px;font-size:11.65px;font-weight:400;color:#2b2f36;transform:scaleX(0.9615);transform-origin:0 0;">12-12-2025</div>
<div class="t r" style="left:931.80px;top:570.80px;font-size:11.67px;font-weight:400;color:#2b2f36;transform:scaleX(0.9615);transform-origin:0 0;">12-19-2026</div>
<svg style="position:absolute;left:1075.20px;top:570.68px;" width="12.50" height="12.50" viewBox="0 0 12 12" fill="none"><path d="M8.6 1.3 Q9.4 0.6 10.3 1.5 L10.6 1.8 Q11.4 2.6 10.6 3.4 L3.6 10.4 Q3.2 10.8 2.6 10.9 L1.1 11 L1.2 9.5 Q1.3 8.9 1.7 8.5 Z" stroke="#3b4352" stroke-width="1.2" stroke-linejoin="round"/></svg>
<svg style="position:absolute;left:1100.50px;top:570.38px;" width="12.00" height="12.00" viewBox="0 0 12 12" fill="none"><path d="M0.9 3.2 H11.1" stroke="#d21f3c" stroke-width="1.3" stroke-linecap="round"/><path d="M4.1 3.2 V1.4 H8.1 V3.2" stroke="#d21f3c" stroke-width="1.2"/><path d="M2.9 3.2 L3.5 10.1 Q3.6 11.0 4.5 11.0 H7.9 Q8.8 11.0 8.9 10.1 L9.6 3.2" stroke="#d21f3c" stroke-width="1.3"/></svg>
<div style="position:absolute;left:92.10px;top:603.86px;width:18.80px;height:18.60px;background:#e8e9eb;border-radius:3px"></div>
<div class="t" style="left:96.38px;top:609.71px;font-size:8.80px;font-weight:700;color:#363a41;transform:scaleX(0.9091);transform-origin:0 0;">H2</div>
<div class="t r" style="left:117.70px;top:607.00px;font-size:12.59px;font-weight:400;color:#2b2f36;transform:scaleX(0.9091);transform-origin:0 0;">HealthNet_2025_HEDIS_Chart_Request</div>
<div style="position:absolute;left:386.20px;top:603.81px;width:17.90px;height:17.90px;background:#efe7f8;border-radius:50%"></div>
<div class="t" style="left:390.38px;top:609.71px;font-size:7.26px;font-weight:700;color:#1e2126;transform:scaleX(0.9091);transform-origin:0 0;">HN</div>
<div class="t r" style="left:411.40px;top:606.76px;font-size:12.87px;font-weight:400;color:#2b2f36;transform:scaleX(0.9091);transform-origin:0 0;">Health Net</div>
<svg style="position:absolute;left:564.00px;top:607.96px;" width="10.40" height="10.40" viewBox="0 0 10 10" fill="none"><circle cx="5" cy="5" r="4.2" stroke="#16794f" stroke-width="1.4"/><path d="M3 5.1 L4.4 6.5 L7.1 3.7" stroke="#1a7f5a" stroke-width="1.3"/></svg>
<div class="t r" style="left:580.70px;top:606.72px;font-size:12.92px;font-weight:400;color:#2b2f36;transform:scaleX(0.9091);transform-origin:0 0;">Completed</div>
<div class="t r" style="left:676.70px;top:607.00px;font-size:11.65px;font-weight:400;color:#2b2f36;transform:scaleX(0.9615);transform-origin:0 0;">12-12-2025</div>
<div class="t r" style="left:802.70px;top:607.00px;font-size:11.65px;font-weight:400;color:#2b2f36;transform:scaleX(0.9615);transform-origin:0 0;">12-12-2025</div>
<div class="t r" style="left:931.80px;top:606.98px;font-size:11.67px;font-weight:400;color:#2b2f36;transform:scaleX(0.9615);transform-origin:0 0;">12-19-2026</div>
<svg style="position:absolute;left:1075.20px;top:606.86px;" width="12.50" height="12.50" viewBox="0 0 12 12" fill="none"><path d="M8.6 1.3 Q9.4 0.6 10.3 1.5 L10.6 1.8 Q11.4 2.6 10.6 3.4 L3.6 10.4 Q3.2 10.8 2.6 10.9 L1.1 11 L1.2 9.5 Q1.3 8.9 1.7 8.5 Z" stroke="#3b4352" stroke-width="1.2" stroke-linejoin="round"/></svg>
<svg style="position:absolute;left:1100.50px;top:606.56px;" width="12.00" height="12.00" viewBox="0 0 12 12" fill="none"><path d="M0.9 3.2 H11.1" stroke="#d21f3c" stroke-width="1.3" stroke-linecap="round"/><path d="M4.1 3.2 V1.4 H8.1 V3.2" stroke="#d21f3c" stroke-width="1.2"/><path d="M2.9 3.2 L3.5 10.1 Q3.6 11.0 4.5 11.0 H7.9 Q8.8 11.0 8.9 10.1 L9.6 3.2" stroke="#d21f3c" stroke-width="1.3"/></svg>
<div style="position:absolute;left:92.10px;top:640.04px;width:18.80px;height:18.60px;background:#e8e9eb;border-radius:3px"></div>
<div class="t" style="left:95.72px;top:645.89px;font-size:8.80px;font-weight:700;color:#363a41;transform:scaleX(0.9091);transform-origin:0 0;">AC</div>
<div class="t r" style="left:117.70px;top:643.12px;font-size:12.67px;font-weight:400;color:#2b2f36;transform:scaleX(0.9091);transform-origin:0 0;">Anthem_CA_Member_Data_Retrieval_Run01</div>
<div style="position:absolute;left:386.20px;top:639.99px;width:17.90px;height:17.90px;background:#efe7f8;border-radius:50%"></div>
<div class="t" style="left:389.66px;top:645.89px;font-size:7.26px;font-weight:700;color:#1e2126;transform:scaleX(0.9091);transform-origin:0 0;">WH</div>
<div class="t r" style="left:411.40px;top:643.20px;font-size:12.57px;font-weight:400;color:#2b2f36;transform:scaleX(0.9091);transform-origin:0 0;">WellCare Health Plans</div>
<svg style="position:absolute;left:564.00px;top:644.14px;" width="10.40" height="10.40" viewBox="0 0 10 10" fill="none"><circle cx="5" cy="5" r="4.2" stroke="#16794f" stroke-width="1.4"/><path d="M3 5.1 L4.4 6.5 L7.1 3.7" stroke="#1a7f5a" stroke-width="1.3"/></svg>
<div class="t r" style="left:580.70px;top:642.90px;font-size:12.92px;font-weight:400;color:#2b2f36;transform:scaleX(0.9091);transform-origin:0 0;">Completed</div>
<div class="t r" style="left:676.70px;top:643.18px;font-size:11.65px;font-weight:400;color:#2b2f36;transform:scaleX(0.9615);transform-origin:0 0;">12-12-2025</div>
<div class="t r" style="left:802.70px;top:643.18px;font-size:11.65px;font-weight:400;color:#2b2f36;transform:scaleX(0.9615);transform-origin:0 0;">12-12-2025</div>
<div class="t r" style="left:931.80px;top:643.16px;font-size:11.67px;font-weight:400;color:#2b2f36;transform:scaleX(0.9615);transform-origin:0 0;">12-19-2026</div>
<svg style="position:absolute;left:1075.20px;top:643.04px;" width="12.50" height="12.50" viewBox="0 0 12 12" fill="none"><path d="M8.6 1.3 Q9.4 0.6 10.3 1.5 L10.6 1.8 Q11.4 2.6 10.6 3.4 L3.6 10.4 Q3.2 10.8 2.6 10.9 L1.1 11 L1.2 9.5 Q1.3 8.9 1.7 8.5 Z" stroke="#3b4352" stroke-width="1.2" stroke-linejoin="round"/></svg>
<svg style="position:absolute;left:1100.50px;top:642.74px;" width="12.00" height="12.00" viewBox="0 0 12 12" fill="none"><path d="M0.9 3.2 H11.1" stroke="#d21f3c" stroke-width="1.3" stroke-linecap="round"/><path d="M4.1 3.2 V1.4 H8.1 V3.2" stroke="#d21f3c" stroke-width="1.2"/><path d="M2.9 3.2 L3.5 10.1 Q3.6 11.0 4.5 11.0 H7.9 Q8.8 11.0 8.9 10.1 L9.6 3.2" stroke="#d21f3c" stroke-width="1.3"/></svg>
<div style="position:absolute;left:92.10px;top:676.22px;width:18.80px;height:18.60px;background:#e8e9eb;border-radius:3px"></div>
<div class="t" style="left:95.06px;top:682.07px;font-size:8.80px;font-weight:700;color:#363a41;transform:scaleX(0.9091);transform-origin:0 0;">WE</div>
<div class="t r" style="left:117.70px;top:679.68px;font-size:12.22px;font-weight:400;color:#2b2f36;transform:scaleX(0.9091);transform-origin:0 0;">WellCare_EMR_Chase_Batch_FL_Q4</div>
<div style="position:absolute;left:386.20px;top:676.17px;width:17.90px;height:17.90px;background:#efe7f8;border-radius:50%"></div>
<div class="t" style="left:390.38px;top:682.07px;font-size:7.26px;font-weight:700;color:#1e2126;transform:scaleX(0.9091);transform-origin:0 0;">UH</div>
<div class="t r" style="left:411.40px;top:678.91px;font-size:13.13px;font-weight:400;color:#2b2f36;transform:scaleX(0.9091);transform-origin:0 0;">UnitedHealthcare</div>
<svg style="position:absolute;left:564.00px;top:680.32px;" width="10.40" height="10.40" viewBox="0 0 10 10" fill="none"><circle cx="5" cy="5" r="4.2" stroke="#16794f" stroke-width="1.4"/><path d="M3 5.1 L4.4 6.5 L7.1 3.7" stroke="#1a7f5a" stroke-width="1.3"/></svg>
<div class="t r" style="left:580.70px;top:679.08px;font-size:12.92px;font-weight:400;color:#2b2f36;transform:scaleX(0.9091);transform-origin:0 0;">Completed</div>
<div class="t r" style="left:676.70px;top:679.36px;font-size:11.65px;font-weight:400;color:#2b2f36;transform:scaleX(0.9615);transform-origin:0 0;">12-12-2025</div>
<div class="t r" style="left:802.70px;top:679.36px;font-size:11.65px;font-weight:400;color:#2b2f36;transform:scaleX(0.9615);transform-origin:0 0;">12-12-2025</div>
<div class="t r" style="left:931.80px;top:679.34px;font-size:11.67px;font-weight:400;color:#2b2f36;transform:scaleX(0.9615);transform-origin:0 0;">12-19-2026</div>
<svg style="position:absolute;left:1075.20px;top:679.22px;" width="12.50" height="12.50" viewBox="0 0 12 12" fill="none"><path d="M8.6 1.3 Q9.4 0.6 10.3 1.5 L10.6 1.8 Q11.4 2.6 10.6 3.4 L3.6 10.4 Q3.2 10.8 2.6 10.9 L1.1 11 L1.2 9.5 Q1.3 8.9 1.7 8.5 Z" stroke="#3b4352" stroke-width="1.2" stroke-linejoin="round"/></svg>
<svg style="position:absolute;left:1100.50px;top:678.92px;" width="12.00" height="12.00" viewBox="0 0 12 12" fill="none"><path d="M0.9 3.2 H11.1" stroke="#d21f3c" stroke-width="1.3" stroke-linecap="round"/><path d="M4.1 3.2 V1.4 H8.1 V3.2" stroke="#d21f3c" stroke-width="1.2"/><path d="M2.9 3.2 L3.5 10.1 Q3.6 11.0 4.5 11.0 H7.9 Q8.8 11.0 8.9 10.1 L9.6 3.2" stroke="#d21f3c" stroke-width="1.3"/></svg>
<div style="position:absolute;left:83.50px;top:704.00px;width:553.00px;height:4.00px;background:#f4f4f5"></div>
<div style="position:absolute;left:636.30px;top:703.80px;width:396.60px;height:4.20px;background:#d2d4d8;border-radius:2px"></div>
<div class="t r" style="left:83.20px;top:725.46px;font-size:11.27px;font-weight:400;color:#2b2f36;transform:scaleX(0.9091);transform-origin:0 0;-webkit-text-stroke:0.5px #2b2f36">Rows per page</div>
<div style="position:absolute;left:156.40px;top:718.50px;width:50.10px;height:21.10px;background:#fff;border:1px solid #d9dce1;border-radius:4px;box-sizing:border-box"></div>
<div class="t r" style="left:161.20px;top:724.18px;font-size:10.54px;font-weight:400;color:#2b2f36;">10</div>
<svg style="position:absolute;left:191.50px;top:726.00px;" width="9.00" height="6.00" viewBox="0 0 9 6" fill="none"><path d="M1 1 L4.5 4.6 L8 1" stroke="#3b4352" stroke-width="1.2"/></svg>
<div class="t" style="left:1035.90px;top:724.75px;font-size:10.10px;font-weight:700;color:#2b2f36;">1-10</div>
<div class="t r" style="left:1058.80px;top:724.40px;font-size:10.52px;font-weight:400;color:#5a606a;transform:scaleX(0.9615);transform-origin:0 0;">of 82</div>
<svg style="position:absolute;left:1103.50px;top:724.00px;" width="8.00" height="11.00" viewBox="0 0 8 11" fill="none"><path d="M6.6 1 L1.9 5.35 L6.6 9.7" stroke="#aeb2b9" stroke-width="1.1"/></svg>
<svg style="position:absolute;left:1131.00px;top:724.00px;" width="8.00" height="11.00" viewBox="0 0 8 11" fill="none"><path d="M1.5 1 L6.2 5.35 L1.5 9.7" stroke="#3b4352" stroke-width="1.25"/></svg>
</body></html>
